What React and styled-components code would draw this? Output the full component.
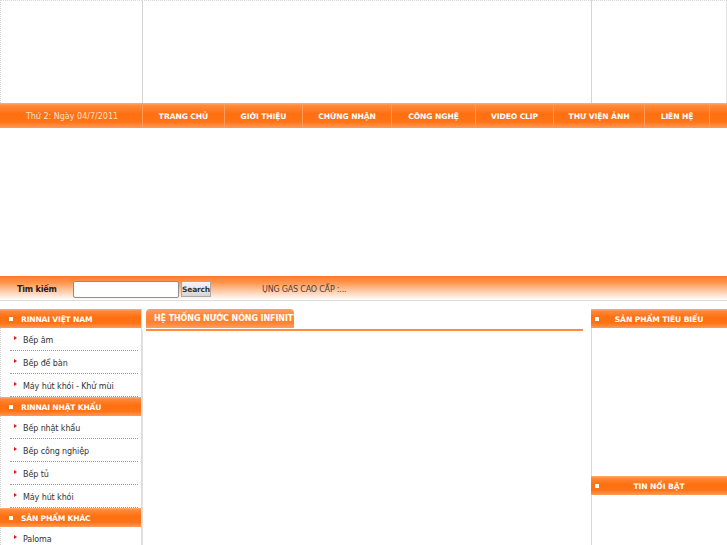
import React from "react";
import styled, { createGlobalStyle } from "styled-components";

const Global = createGlobalStyle`
  html, body { margin: 0; padding: 0; background: #fff; }
  body { font-family: "DejaVu Sans", Verdana, sans-serif; font-size: 8px; color: #333; }
  * { box-sizing: border-box; }
`;

const Page = styled.div`
  width: 727px;
  overflow: hidden;
`;

const Header = styled.div`
  display: grid;
  grid-template-columns: 142px 449px 1fr;
  height: 103px;
`;

const HeaderCell = styled.div`
  border-top: 1px dotted #d8d8d8;
  border-left: 1px ${(p) => (p.$dotted ? "dotted #d0d0d0" : "solid #d4d4d4")};
  border-right: 1px ${(p) => (p.$last ? "solid #e0e0e0" : "none")};
  background: #fff;
`;

const orange = `linear-gradient(to bottom, #ffb07a 0%, #ff8a3a 10%, #ff6f10 45%, #ff7416 75%, #ff9a58 100%)`;

const Nav = styled.div`
  display: flex;
  height: 25px;
  background: ${orange};
  align-items: stretch;
`;

const DateCell = styled.div`
  width: 143px;
  display: flex;
  align-items: center;
  justify-content: center;
  color: #ffe2c8;
  font-size: 8px;
  border-right: 1px solid #ff9d5e;
  padding: 2px 0 0 2px;
`;

const NavItem = styled.a`
  display: flex;
  align-items: center;
  justify-content: center;
  width: ${(p) => p.$w}px;
  color: #fff;
  font-weight: bold;
  font-size: 7.6px;
  letter-spacing: -0.1px;
  text-decoration: none;
  border-right: 1px solid #ff9d5e;
  padding-top: 2px;
  white-space: nowrap;
`;

const Banner = styled.div`
  height: 148px;
`;

const SearchBar = styled.div`
  height: 25px;
  display: flex;
  align-items: center;
  background: linear-gradient(to bottom, #ff7a28 0%, #ff9248 25%, #ffc6a0 60%, #fff2ea 90%, #ffffff 100%);
  border-bottom: 1px solid #dcdcdc;
  padding-left: 17px;
  padding-top: 2px;
`;

const SearchLabel = styled.span`
  font-weight: bold;
  color: #222;
  font-size: 8px;
  letter-spacing: -0.2px;
  width: 56px;
`;

const SearchInput = styled.input`
  width: 106px;
  height: 17px;
  border: 1px solid #8e8e8e;
  border-radius: 2px;
  background: #fff;
  padding: 0;
  margin: 0;
`;

const SearchButton = styled.button`
  margin-left: 2px;
  width: 30px;
  height: 16px;
  padding: 0;
  border: 1px solid #a9a9a9;
  background: linear-gradient(#f4f4f4, #d6d6d6);
  font-family: "DejaVu Sans", Verdana, sans-serif;
  font-weight: bold;
  font-size: 7.5px;
  color: #333;
  letter-spacing: -0.2px;
`;

const Marquee = styled.span`
  margin-left: 51px;
  color: #444;
  font-size: 8px;
  letter-spacing: -0.2px;
`;

const Main = styled.div`
  display: grid;
  grid-template-columns: 142px 449px 1fr;
  margin-top: 8px;
`;

const LeftCol = styled.div`
  border-left: 1px dotted #d0d0d0;
  border-right: 1px solid #dcdcdc;
`;

const BoxHead = styled.div`
  height: 19px;
  display: flex;
  align-items: center;
  justify-content: ${(p) => (p.$center ? "center" : "flex-start")};
  position: relative;
  background: ${orange};
  color: #fff;
  font-weight: bold;
  font-size: 7.6px;
  letter-spacing: ${(p) => (p.$center ? "-0.1px" : "-0.2px")};
  padding-left: ${(p) => (p.$center ? "0" : "21px")};
  padding-top: 1px;
  margin-left: ${(p) => (p.$flush ? "-1px" : "0")};
  white-space: nowrap;
`;

const Square = styled.span`
  position: absolute;
  left: ${(p) => p.$left}px;
  top: 8px;
  width: 4px;
  height: 4px;
  background: #fff;
`;

const MenuItem = styled.div`
  height: 23px;
  margin: 0 3px 0 9px;
  border-bottom: 1px dotted #9a9a9a;
  display: flex;
  align-items: center;
  padding: 2px 0 0 4px;
  color: #333;
  font-size: 8px;
  letter-spacing: -0.1px;
`;

const Arrow = styled.span`
  width: 0;
  height: 0;
  border-top: 2.5px solid transparent;
  border-bottom: 2.5px solid transparent;
  border-left: 3px solid #e8141b;
  margin-right: 6px;
  margin-top: -4px;
`;

const Center = styled.div`
  padding: 1px 8px 0 3px;
  border-left: 1px solid #e2e2e2;
  margin-top: 21px;
  height: 220px;
  position: relative;
`;

const TabRow = styled.div`
  position: absolute;
  top: -21px;
  left: 0;
  right: 0;
  padding: 0 8px 0 3px;
`;

const Tab = styled.div`
  width: 148px;
  height: 19px;
  border-radius: 4px 4px 0 0;
  background: linear-gradient(to bottom, #ffa060 0%, #ff8a3a 30%, #ff8030 70%, #ffa060 100%);
  color: #fff;
  font-weight: bold;
  font-size: 8px;
  letter-spacing: -0.1px;
  display: flex;
  align-items: center;
  padding: 0 0 1px 8px;
  overflow: hidden;
  white-space: nowrap;
`;

const TabLine = styled.div`
  height: 2px;
  background: #ff8c40;
  margin-top: 1px;
`;

const RightCol = styled.div``;

const RightBox = styled.div`
  height: ${(p) => p.$h}px;
  border-left: 1px solid #d8d8d8;
`;

const leftMenu = [
  { title: "RINNAI VIỆT NAM", items: ["Bếp âm", "Bếp để bàn", "Máy hút khói - Khử mùi"] },
  { title: "RINNAI NHẬT KHẨU", items: ["Bếp nhật khẩu", "Bếp công nghiệp", "Bếp tủ", "Máy hút khói"] },
  { title: "SẢN PHẨM KHÁC", items: ["Paloma"] },
];

const navItems = [
  ["TRANG CHỦ", 82],
  ["GIỚI THIỆU", 78],
  ["CHỨNG NHẬN", 89],
  ["CÔNG NGHỆ", 84],
  ["VIDEO CLIP", 78],
  ["THƯ VIỆN ẢNH", 91],
  ["LIÊN HỆ", 65],
];

export default function App() {
  return (
    <Page>
      <Global />
      <Header>
        <HeaderCell $dotted />
        <HeaderCell />
        <HeaderCell $last />
      </Header>
      <Nav>
        <DateCell>Thứ 2: Ngày 04/7/2011</DateCell>
        {navItems.map(([t, w]) => (
          <NavItem key={t} $w={w} href="#">
            {t}
          </NavItem>
        ))}
      </Nav>
      <Banner />
      <SearchBar>
        <SearchLabel>Tìm kiếm</SearchLabel>
        <SearchInput type="text" />
        <SearchButton>Search</SearchButton>
        <Marquee>ỤNG GAS CAO CẤP :...</Marquee>
      </SearchBar>
      <Main>
        <LeftCol>
          {leftMenu.map((g) => (
            <div key={g.title}>
              <BoxHead $flush>
                <Square $left={9} />
                {g.title}
              </BoxHead>
              {g.items.map((it) => (
                <MenuItem key={it}>
                  <Arrow />
                  {it}
                </MenuItem>
              ))}
            </div>
          ))}
        </LeftCol>
        <Center>
          <TabRow>
            <Tab>HỆ THỐNG NƯỚC NÓNG INFINITY</Tab>
            <TabLine />
          </TabRow>
        </Center>
        <RightCol>
          <BoxHead $center>
            <Square $left={4} />
            SẢN PHẨM TIÊU BIỂU
          </BoxHead>
          <RightBox $h={148} />
          <BoxHead $center>
            <Square $left={4} />
            TIN NỔI BẬT
          </BoxHead>
          <RightBox $h={60} />
        </RightCol>
      </Main>
    </Page>
  );
}
